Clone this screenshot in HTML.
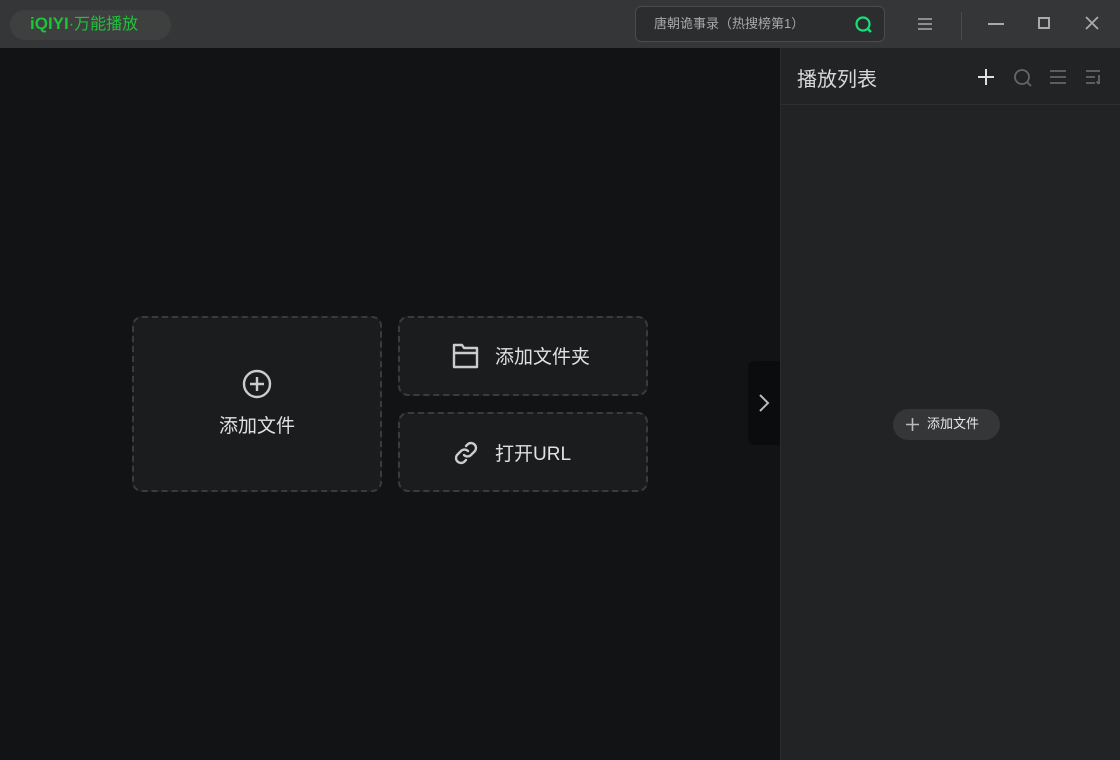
<!DOCTYPE html>
<html><head><meta charset="utf-8"><style>
*{margin:0;padding:0;box-sizing:border-box}
body{width:1120px;height:760px;overflow:hidden;background:#121315;font-family:"Liberation Sans","Noto Sans CJK SC",sans-serif;position:relative}
.tb{position:absolute;left:0;top:0;width:1120px;height:48px;background:#353638}
.logo{position:absolute;left:10px;top:10px;width:161px;height:30px;border-radius:15px;background:#3e403f;color:#1fc23b;font-weight:bold;font-size:17px;line-height:28px;padding-left:20px}
.search{position:absolute;left:635px;top:6px;width:250px;height:36px;border:1px solid #4a4b4e;border-radius:6px;background:#2c2d2f;color:#a8a8a8;font-size:13px;line-height:34px;padding-left:18px}
.abs{position:absolute}
.side{position:absolute;left:780px;top:48px;width:340px;height:712px;background:#222325;border-left:1px solid #2a2b2d}
.card{position:absolute;border:2px dashed #3a3b3e;border-radius:10px;background:#1b1c1e;color:#e0e0e0;font-size:19px}
</style></head><body>
<div class="tb">
<div class="logo">iQIYI<span style="font-weight:normal;font-size:16px">·万能播放</span></div>
<div class="search">唐朝诡事录（热搜榜第1）
<svg class="abs" style="left:218px;top:8px" width="20" height="20" viewBox="0 0 20 20"><circle cx="9" cy="9" r="6.5" fill="none" stroke="#17e07a" stroke-width="2.2"/><path d="M13.5 13.5L17 17" stroke="#17e07a" stroke-width="2.4"/></svg></div>
<svg class="abs" style="left:917px;top:16px" width="16" height="16"><path d="M1 3H15M1 8H15M1 13H15" stroke="#aaa" stroke-width="1.6"/></svg>
<div class="abs" style="left:961px;top:12px;width:1px;height:28px;background:#4a4b4d"></div>
<div class="abs" style="left:988px;top:23px;width:16px;height:2px;background:#aaa"></div>
<div class="abs" style="left:1038px;top:17px;width:12px;height:12px;border:2px solid #aaa"></div>
<svg class="abs" style="left:1085px;top:16px" width="14" height="14"><path d="M1 1L13 13M13 1L1 13" stroke="#aaa" stroke-width="1.8"/></svg>
</div>
<div class="side">
<div class="abs" style="left:16px;top:15px;color:#d8d8d8;font-size:20px">播放列表</div>
<svg class="abs" style="left:196px;top:20px" width="18" height="18"><path d="M9 1V17M1 9H17" stroke="#e0e0e0" stroke-width="2"/></svg>
<svg class="abs" style="left:232px;top:20px" width="20" height="20"><circle cx="9" cy="9" r="7" fill="none" stroke="#666" stroke-width="1.8"/><path d="M14 14L18 18" stroke="#666" stroke-width="1.8"/></svg>
<svg class="abs" style="left:268px;top:21px" width="18" height="16"><path d="M1 2H17M1 8H17M1 14H17" stroke="#666" stroke-width="1.8"/></svg>
<svg class="abs" style="left:304px;top:21px" width="18" height="16"><path d="M1 2H15M1 8H10M1 14H10M14 6V15M11.5 12.5L14 15" stroke="#666" stroke-width="1.8" fill="none"/></svg>
<div class="abs" style="left:0;top:56px;width:340px;height:1px;background:#2e2f31"></div>
<div class="abs" style="left:112px;top:361px;width:107px;height:31px;border-radius:16px;background:#353638;color:#e8e8e8;font-size:13px;line-height:29px;padding-left:34px">添加文件
<svg class="abs" style="left:13px;top:9px" width="13" height="13"><path d="M6.5 0V13M0 6.5H13" stroke="#bbb" stroke-width="1.6"/></svg></div>
</div>
<div class="abs" style="left:748px;top:361px;width:32px;height:84px;border-radius:6px 0 0 6px;background:#0b0c0e"></div>
<svg class="abs" style="left:757px;top:393px" width="14" height="20"><path d="M3 2L11 10L3 18" stroke="#bbb" stroke-width="2" fill="none"/></svg>
<div class="card" style="left:132px;top:316px;width:250px;height:176px">
<svg class="abs" style="left:108px;top:51px" width="30" height="30"><circle cx="15" cy="15" r="13" fill="none" stroke="#ccc" stroke-width="2.4"/><path d="M15 8V22M8 15H22" stroke="#ccc" stroke-width="2.4"/></svg>
<div class="abs" style="left:0;top:93px;width:246px;text-align:center">添加文件</div></div>
<div class="card" style="left:398px;top:316px;width:250px;height:80px">
<svg class="abs" style="left:52px;top:24px" width="28" height="28"><path d="M2 3H10L12 6H25V25H2Z M2 11H25" fill="none" stroke="#ccc" stroke-width="2.4" stroke-linejoin="round"/></svg>
<div class="abs" style="left:95px;top:24px">添加文件夹</div></div>
<div class="card" style="left:398px;top:412px;width:250px;height:80px">
<svg class="abs" style="left:52px;top:25px" width="28" height="28"><path d="M12 16a5 5 0 0 0 7 0l4-4a5 5 0 0 0-7-7l-2 2M16 12a5 5 0 0 0-7 0l-4 4a5 5 0 0 0 7 7l2-2" fill="none" stroke="#ccc" stroke-width="2.4" stroke-linecap="round"/></svg>
<div class="abs" style="left:95px;top:25px">打开URL</div></div>
</body></html>
